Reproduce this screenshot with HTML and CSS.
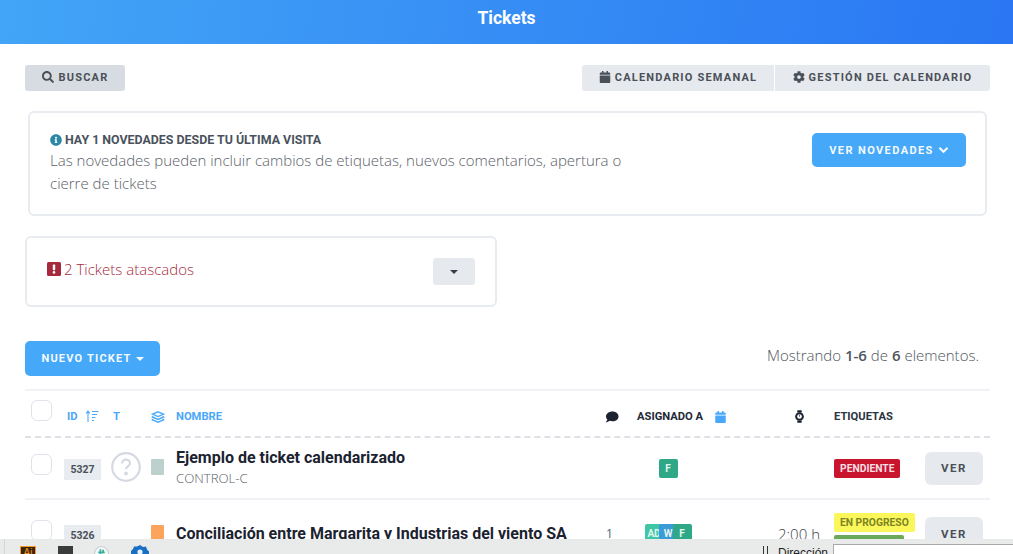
FILE: index.html
```html
<!DOCTYPE html>
<html lang="en">
<head>
    <meta charset="UTF-8">
    <meta name="viewport" content="width=device-width, initial-scale=1.0">
    <title>Tickets</title>
    <link rel="stylesheet" href="styles.css">
</head>
<body>
    <header class="topbar">Tickets</header>

    <main class="content">
        <!-- Toolbar -->
        <div class="toolbar">
            <button class="btn btn-search">
                <svg class="icon" viewBox="0 0 512 512"><path d="M505 442.7L405.3 343c-4.5-4.5-10.6-7-17-7H372c27.6-35.3 44-79.7 44-128C416 93.1 322.9 0 208 0S0 93.1 0 208s93.1 208 208 208c48.3 0 92.7-16.4 128-44v16.3c0 6.4 2.5 12.5 7 17l99.7 99.7c9.4 9.4 24.6 9.4 33.9 0l28.3-28.3c9.4-9.4 9.4-24.6.1-34zM208 336c-70.7 0-128-57.2-128-128 0-70.7 57.2-128 128-128 70.7 0 128 57.2 128 128 0 70.7-57.2 128-128 128z"/></svg>
                BUSCAR
            </button>
            <div class="btn-group">
                <button class="btn btn-light">
                    <svg class="icon" viewBox="0 0 448 512"><path d="M12 192h424c6.6 0 12 5.4 12 12v260c0 26.5-21.5 48-48 48H48c-26.5 0-48-21.5-48-48V204c0-6.6 5.4-12 12-12zm436-44v-36c0-26.5-21.5-48-48-48h-48V12c0-6.6-5.4-12-12-12h-40c-6.6 0-12 5.4-12 12v52H160V12c0-6.6-5.4-12-12-12h-40c-6.6 0-12 5.4-12 12v52H48C21.5 64 0 85.5 0 112v36c0 6.6 5.4 12 12 12h424c6.6 0 12-5.4 12-12z"/></svg>
                    CALENDARIO SEMANAL
                </button>
                <button class="btn btn-light">
                    <svg class="icon" viewBox="0 0 512 512"><path d="M487.4 315.7l-42.6-24.6c4.3-23.2 4.3-47 0-70.2l42.6-24.6c4.9-2.8 7.1-8.6 5.5-14-11.1-35.6-30-67.8-54.7-94.6-3.8-4.1-10-5.1-14.8-2.3L380.8 110c-17.9-15.4-38.5-27.3-60.8-35.1V25.8c0-5.6-3.9-10.5-9.4-11.7-36.7-8.2-74.3-7.8-109.2 0-5.5 1.2-9.4 6.1-9.4 11.7V75c-22.2 7.9-42.8 19.8-60.8 35.1L88.7 85.5c-4.9-2.8-11-1.9-14.8 2.3-24.7 26.7-43.6 58.9-54.7 94.6-1.7 5.4.6 11.2 5.5 14L67.3 221c-4.3 23.2-4.3 47 0 70.2l-42.6 24.6c-4.9 2.8-7.1 8.6-5.5 14 11.1 35.6 30 67.8 54.7 94.6 3.8 4.1 10 5.1 14.8 2.3l42.6-24.6c17.9 15.4 38.5 27.3 60.8 35.1v49.2c0 5.6 3.9 10.5 9.4 11.7 36.7 8.2 74.3 7.8 109.2 0 5.5-1.2 9.4-6.1 9.4-11.7v-49.2c22.2-7.9 42.8-19.8 60.8-35.1l42.6 24.6c4.9 2.8 11 1.9 14.8-2.3 24.7-26.7 43.6-58.9 54.7-94.6 1.5-5.5-.7-11.3-5.6-14.1zM256 336c-44.1 0-80-35.9-80-80s35.9-80 80-80 80 35.9 80 80-35.9 80-80 80z"/></svg>
                    GESTIÓN DEL CALENDARIO
                </button>
            </div>
        </div>

        <!-- News panel -->
        <section class="panel panel-news">
            <div class="news-text">
                <h2>
                    <svg class="icon icon-info" viewBox="0 0 512 512"><path d="M256 8C119 8 8 119.1 8 256c0 137 111 248 248 248s248-111 248-248C504 119.1 393 8 256 8zm0 110c23.2 0 42 18.8 42 42s-18.8 42-42 42-42-18.8-42-42 18.8-42 42-42zm56 254c0 6.6-5.4 12-12 12h-88c-6.6 0-12-5.4-12-12v-24c0-6.6 5.4-12 12-12h12v-64h-12c-6.6 0-12-5.4-12-12v-24c0-6.6 5.4-12 12-12h64c6.6 0 12 5.4 12 12v100h12c6.6 0 12 5.4 12 12v24z"/></svg>
                    HAY 1 NOVEDADES DESDE TU ÚLTIMA VISITA
                </h2>
                <p>Las novedades pueden incluir cambios de etiquetas, nuevos comentarios, apertura o cierre de tickets</p>
            </div>
            <button class="btn btn-primary btn-news">
                VER NOVEDADES
                <svg class="icon icon-chevron" viewBox="0 0 12 8"><path d="M1.5 1.5L6 6l4.5-4.5"/></svg>
            </button>
        </section>

        <!-- Stuck tickets -->
        <section class="panel panel-stuck">
            <div class="stuck-text">
                <svg class="icon-alert" viewBox="0 0 14 14"><rect width="14" height="14" rx="1.5" fill="#a52a3c"/><rect x="5.8" y="2.6" width="2.4" height="5.6" rx=".6" fill="#fff"/><circle cx="7" cy="10.4" r="1.3" fill="#fff"/></svg>
                2 Tickets atascados
            </div>
            <button class="btn btn-caret"><span class="caret caret-dark"></span></button>
        </section>

        <div class="list-actions">
            <button class="btn btn-primary btn-new">NUEVO TICKET <span class="caret"></span></button>
            <div class="summary">Mostrando <b>1-6</b> de <b>6</b> elementos.</div>
        </div>

        <!-- Ticket table -->
        <div class="ticket-table">
            <div class="row row-head">
                <span class="check check-head"></span>
                <span class="head-blue head-id">ID
                    <svg class="icon-sort" viewBox="0 0 14 13"><path d="M3 12V1.5M1 3.500L3 1.200l2 2.300M7 1.500h6.500M7 4.500h5M7 7.500h3.500M7 10.500h2"/></svg>
                </span>
                <span class="head-blue head-type">T</span>
                <svg class="icon-layers" viewBox="0 0 14 12"><path d="M7 .8l5.600 2.400L7 5.600 1.400 3.200zM2.400 5.200L1.400 6 7 8.400 12.600 6l-1-.8M2.400 8L1.400 8.800 7 11.200l5.600-2.400-1-.8"/></svg>
                <span class="head-blue">NOMBRE</span>
                <svg class="icon-comment" viewBox="0 0 14 12"><path d="M7.500.5C3.900.5 1 2.700 1 5.400c0 1.200.5 2.200 1.400 3C2.100 9.500 1.400 10.600.5 11.300c1.700 0 3.200-.7 4.300-1.500.8.300 1.700.4 2.700.4 3.600 0 6-2.100 6-4.800S11.100.5 7.500.5z"/></svg>
                <span class="head-assigned">ASIGNADO A
                    <svg class="icon-cal-blue" viewBox="0 0 448 512"><path d="M12 192h424c6.600 0 12 5.400 12 12v260c0 26.500-21.500 48-48 48H48c-26.500 0-48-21.500-48-48V204c0-6.600 5.400-12 12-12zm436-44v-36c0-26.500-21.500-48-48-48h-48V12c0-6.600-5.400-12-12-12h-40c-6.600 0-12 5.400-12 12v52H160V12c0-6.600-5.400-12-12-12h-40c-6.600 0-12 5.400-12 12v52H48C21.500 64 0 85.500 0 112v36c0 6.600 5.400 12 12 12h424c6.600 0 12-5.400 12-12z"/></svg>
                </span>
                <svg class="icon-watch" viewBox="0 0 10 14"><rect x="2.500" y="0" width="5" height="2.500" rx=".5"/><rect x="2.500" y="11.500" width="5" height="2.500" rx=".5"/><circle cx="5" cy="7" r="4.800"/><circle cx="5" cy="7" r="2.600" fill="#fff"/><path d="M4.600 5h.8v2.400h-.8z"/></svg>
                <span class="head-tags">ETIQUETAS</span>
            </div>

            <div class="row row-ticket">
                <span class="check"></span>
                <span class="ticket-id">5327</span>
                <svg class="icon-question" viewBox="0 0 30 30"><circle cx="15" cy="15" r="13.800"/><path d="M11 11.500c0-2.300 1.800-3.900 4-3.900s4 1.600 4 3.700c0 2.800-4 2.800-4 5.900"/><circle cx="15" cy="21.500" r="2"/></svg>
                <span class="color-tag color-grey"></span>
                <div class="ticket-name">
                    <div class="name-title">Ejemplo de ticket calendarizado</div>
                    <div class="name-sub">CONTROL-C</div>
                </div>
                <span></span>
                <div class="assignees"><span class="user user-green">F</span></div>
                <span></span>
                <div class="tags"><span class="tag tag-red">PENDIENTE</span></div>
                <button class="btn btn-see">VER</button>
            </div>

            <div class="row row-ticket row-tall">
                <span class="check"></span>
                <span class="ticket-id">5326</span>
                <span></span>
                <span class="color-tag color-orange"></span>
                <div class="ticket-name">
                    <div class="name-title">Conciliación entre Margarita y Industrias del viento SA</div>
                </div>
                <span class="comment-count">1</span>
                <div class="assignees">
                    <span class="user user-teal">AD</span><span class="user user-blue">W</span><span class="user user-green">F</span>
                </div>
                <span class="ticket-time">2:00 h</span>
                <div class="tags">
                    <span class="tag tag-yellow">EN PROGRESO</span>
                    <span class="tag tag-lime">&nbsp;</span>
                </div>
                <button class="btn btn-see">VER</button>
            </div>
        </div>
    </main>

    <!-- Windows taskbar caught in the screenshot -->
    <footer class="taskbar">
        <span class="task-sep"></span>
        <span class="task-ai">Ai</span>
        <span class="task-dark"></span>
        <svg class="task-slack" viewBox="0 0 14 14"><circle cx="7" cy="7" r="6.500" fill="#f4f6f6" stroke="#c8d2d2"/><path d="M4 6h6" stroke="#2eb67d" stroke-width="1.600"/><path d="M6 3v6" stroke="#36a6c9" stroke-width="1.600"/><path d="M8.500 3.500v3" stroke="#2eb67d" stroke-width="1.600"/></svg>
        <svg class="task-blue" viewBox="0 0 18 14"><path d="M9 0l3 2 3-.5 1 3 2 2V14H0V6l2-2 1-2.500h3z" fill="#1a6fc4"/><circle cx="9" cy="7" r="2.600" fill="#e8f1fa"/></svg>
        <span class="task-spacer"></span>
        <span class="task-grip"></span>
        <span class="task-label">Dirección</span>
        <span class="task-input"></span>
    </footer>
</body>
</html>
```

FILE: styles.css
```css
/* Global Styles */
html, body {
    margin: 0;
    padding: 0;
    height: 100%;
    overflow: hidden;
    background: #fff;
    font-family: 'Open Sans', 'Noto Sans', sans-serif;
    color: #1f2937;
}

button {
    font-family: inherit;
}

.icon {
    width: 12px;
    height: 12px;
    fill: currentColor;
    flex: none;
}

/* Top bar */
.topbar {
    height: 44px;
    line-height: 37px;
    text-align: center;
    color: #fff;
    font-family: 'Roboto', sans-serif;
    font-size: 17.5px;
    font-weight: 700;
    background: linear-gradient(100deg, #42a5f6, #2a76f3);
}

.content {
    padding: 21px 23px 0 25px;
}

/* Buttons */
.btn {
    display: inline-flex;
    align-items: center;
    justify-content: center;
    gap: 4px;
    border: none;
    border-radius: 3px;
    font-family: 'Roboto', sans-serif;
    font-weight: 700;
    font-size: 11px;
    letter-spacing: 1.2px;
    color: #4a5058;
    background: #e6e9ee;
}

.btn-search {
    width: 100px;
    height: 26px;
    padding: 0 0 2px;
    gap: 5px;
    background: #d6dce2;
}

.btn-light {
    height: 26px;
    padding: 0 0 2px;
}

.btn-primary {
    color: #f4faff;
    background: #45a8f8;
    border-radius: 5px;
}

.toolbar {
    display: flex;
    justify-content: space-between;
}

.btn-group {
    display: flex;
    gap: 1px;
}

.btn-group .btn:first-child {
    width: 192px;
    border-radius: 3px 0 0 3px;
}

.btn-group .btn:last-child {
    width: 215px;
    border-radius: 0 3px 3px 0;
}

/* Panels */
.panel {
    box-sizing: border-box;
    border: 2px solid #e8ecf1;
    border-radius: 6px;
    display: flex;
    justify-content: space-between;
}

.panel-news {
    height: 105px;
    margin: 20px 3px 0;
    padding: 20px 19px 0 20px;
}

.news-text {
    width: 590px;
}

.news-text h2 {
    margin: 0;
    display: flex;
    align-items: center;
    gap: 3px;
    font-family: 'Roboto', sans-serif;
    font-size: 12.4px;
    line-height: 14px;
    font-weight: 700;
    color: #49525c;
}

.icon-info {
    color: #2a87a6;
}

.news-text p {
    margin: 2px 0 0;
    font-size: 15px;
    line-height: 23px;
    font-weight: 300;
    color: #5a6068;
}

.btn-news {
    width: 154px;
    height: 34px;
    letter-spacing: 1.4px;
}

.icon-chevron {
    width: 11px;
    height: 8px;
    fill: none;
    stroke: currentColor;
    stroke-width: 2.2;
}

.panel-stuck {
    width: 472px;
    height: 71px;
    margin-top: 20px;
    padding: 20px 20px 0 20px;
}

.stuck-text {
    display: flex;
    align-items: center;
    gap: 3px;
    height: 22px;
    font-size: 15px;
    font-weight: 300;
    color: #a52a3c;
}

.icon-alert {
    width: 14px;
    height: 14px;
}

.btn-caret {
    width: 42px;
    height: 27px;
}

.caret {
    display: inline-block;
    border-left: 4px solid transparent;
    border-right: 4px solid transparent;
    border-top: 4px solid #f4faff;
}

.caret-dark {
    border-top-color: #3a3f46;
}

/* List actions */
.list-actions {
    display: flex;
    justify-content: space-between;
    align-items: center;
    margin-top: 34px;
}

.btn-new {
    width: 135px;
    height: 35px;
}

.summary {
    margin: 0 11px 8px 0;
    font-size: 15px;
    font-weight: 300;
    color: #4f555c;
}

.summary b {
    font-weight: 600;
}

/* Ticket table */
.ticket-table {
    margin-top: 13px;
    border-top: 2px solid #f0f2f6;
}

.row {
    display: grid;
    grid-template-columns: 39px 47px 40px 25px 425px 35px 140px 58px 91px 65px;
    align-items: center;
}

.row-head {
    height: 39px;
    padding-top: 6px;
    border-bottom: 2px dashed #dde1e6;
    font-family: 'Roboto', sans-serif;
    font-size: 11.2px;
    font-weight: 700;
}

.row-ticket {
    height: 60px;
    border-bottom: 2px solid #f0f2f6;
}

.row-tall {
    height: 67px;
}

.check {
    box-sizing: border-box;
    display: block;
    width: 21px;
    height: 21px;
    margin: -7px 0 0 6px;
    border: 1.5px solid #dfe3e9;
    border-radius: 6px;
    background: #fff;
}

.check-head {
    margin-top: -12px;
}

.head-blue {
    display: flex;
    align-items: center;
    gap: 7px;
    color: #4aa8fb;
}

.head-id {
    padding-left: 3px;
}

.head-type {
    padding-left: 2px;
}

.icon-sort {
    width: 14px;
    height: 13px;
    fill: none;
    stroke: #4aa8fb;
    stroke-width: 1.1;
}

.icon-layers {
    width: 14px;
    height: 12px;
    fill: none;
    stroke: #4aa8fb;
    stroke-width: 1.4;
}

.icon-comment {
    width: 14px;
    height: 12px;
    fill: #1b2230;
    margin-left: 4px;
}

.head-assigned {
    display: flex;
    align-items: center;
    gap: 12px;
    padding-left: 1px;
    color: #1f2937;
}

.icon-cal-blue {
    width: 11px;
    height: 12px;
    fill: #4aa8fb;
}

.icon-watch {
    width: 9px;
    height: 13px;
    fill: #1b2230;
    margin-left: 19px;
}

.head-tags {
    color: #2b3440;
}

.ticket-id {
    width: 37px;
    height: 21px;
    margin-top: 3px;
    line-height: 21px;
    text-align: center;
    font-family: 'Roboto', sans-serif;
    font-size: 10.5px;
    font-weight: 700;
    color: #4a5058;
    background: #e8ebef;
}

.icon-question {
    width: 30px;
    height: 30px;
    margin-top: -2px;
    fill: none;
    stroke: #d5d9e1;
    stroke-width: 2.2;
}

.icon-question circle:last-child {
    fill: #d5d9e1;
    stroke: none;
}

.color-tag {
    display: block;
    width: 13px;
    height: 16px;
    margin-top: -2px;
    border-radius: 1px;
}

.color-grey {
    background: #bcd0cd;
}

.color-orange {
    background: #fda45c;
}

.name-title {
    font-family: 'Roboto', sans-serif;
    font-size: 16px;
    line-height: 20px;
    font-weight: 700;
    color: #1b2230;
}

.name-sub {
    font-size: 13.2px;
    line-height: 20px;
    font-weight: 300;
    color: #5a6068;
}

.comment-count {
    font-size: 12px;
    color: #4a6a7a;
    padding-left: 5px;
}

.assignees {
    display: flex;
    justify-content: center;
    width: 64px;
}

.user {
    width: 19px;
    height: 19px;
    border-radius: 2px;
    text-align: center;
    line-height: 19px;
    font-family: 'Roboto', sans-serif;
    font-size: 10px;
    font-weight: 700;
    color: #e4f5ef;
    overflow: hidden;
}

.user + .user {
    margin-left: -5px;
}

.user-green {
    background: #2fa888;
}

.user-teal {
    background: #3ec7a5;
}

.user-blue {
    background: #3b9bd6;
}

.ticket-time {
    padding-right: 14px;
    font-size: 15px;
    font-weight: 300;
    color: #3a4048;
    text-align: right;
    white-space: nowrap;
}

.tags {
    display: flex;
    flex-direction: column;
    align-items: flex-start;
    gap: 3px;
}

.tag {
    padding: 0 6px;
    height: 19px;
    line-height: 19px;
    border-radius: 2px;
    font-family: 'Roboto', sans-serif;
    font-size: 10.3px;
    font-weight: 700;
}

.tag-red {
    color: #f6dfe3;
    background: #c9142e;
}

.tag-yellow {
    color: #7c8424;
    background: #fbf75a;
}

.tag-lime {
    width: 58px;
    background: #6aa85a;
}

.btn-see {
    width: 58px;
    height: 33px;
    border-radius: 6px;
    font-size: 11.5px;
    letter-spacing: 1.5px;
}

/* Taskbar */
.taskbar {
    position: fixed;
    left: 0;
    right: 0;
    bottom: 0;
    height: 15px;
    display: flex;
    align-items: flex-start;
    background: #e9ebea;
    overflow: hidden;
    font-family: 'Liberation Sans', sans-serif;
    font-size: 12px;
    color: #222;
}

.task-sep {
    width: 1px;
    height: 15px;
    margin-left: 4px;
    background: #d4d6d6;
}

.task-ai {
    box-sizing: border-box;
    width: 16px;
    height: 16px;
    margin: 7px 0 0 15px;
    border: 1px solid #f29a1f;
    background: #3c2410;
    color: #f29a1f;
    font-size: 10px;
    line-height: 12px;
    text-align: center;
}

.task-dark {
    width: 15px;
    height: 16px;
    margin: 7px 0 0 22px;
    background: #3b3b3b;
}

.task-slack {
    width: 15px;
    height: 15px;
    margin: 7px 0 0 21px;
}

.task-blue {
    width: 18px;
    height: 14px;
    margin: 6px 0 0 22px;
}

.task-spacer {
    flex: 1;
}

.task-grip {
    width: 3px;
    height: 8px;
    margin-top: 7px;
    border-left: 1px solid #333;
    border-right: 1px solid #333;
}

.task-label {
    margin: 7px 5px 0 10px;
}

.task-input {
    width: 179px;
    height: 15px;
    margin-top: 5px;
    background: #fff;
    border: 1px solid #aaa;
    border-right: none;
}
```
